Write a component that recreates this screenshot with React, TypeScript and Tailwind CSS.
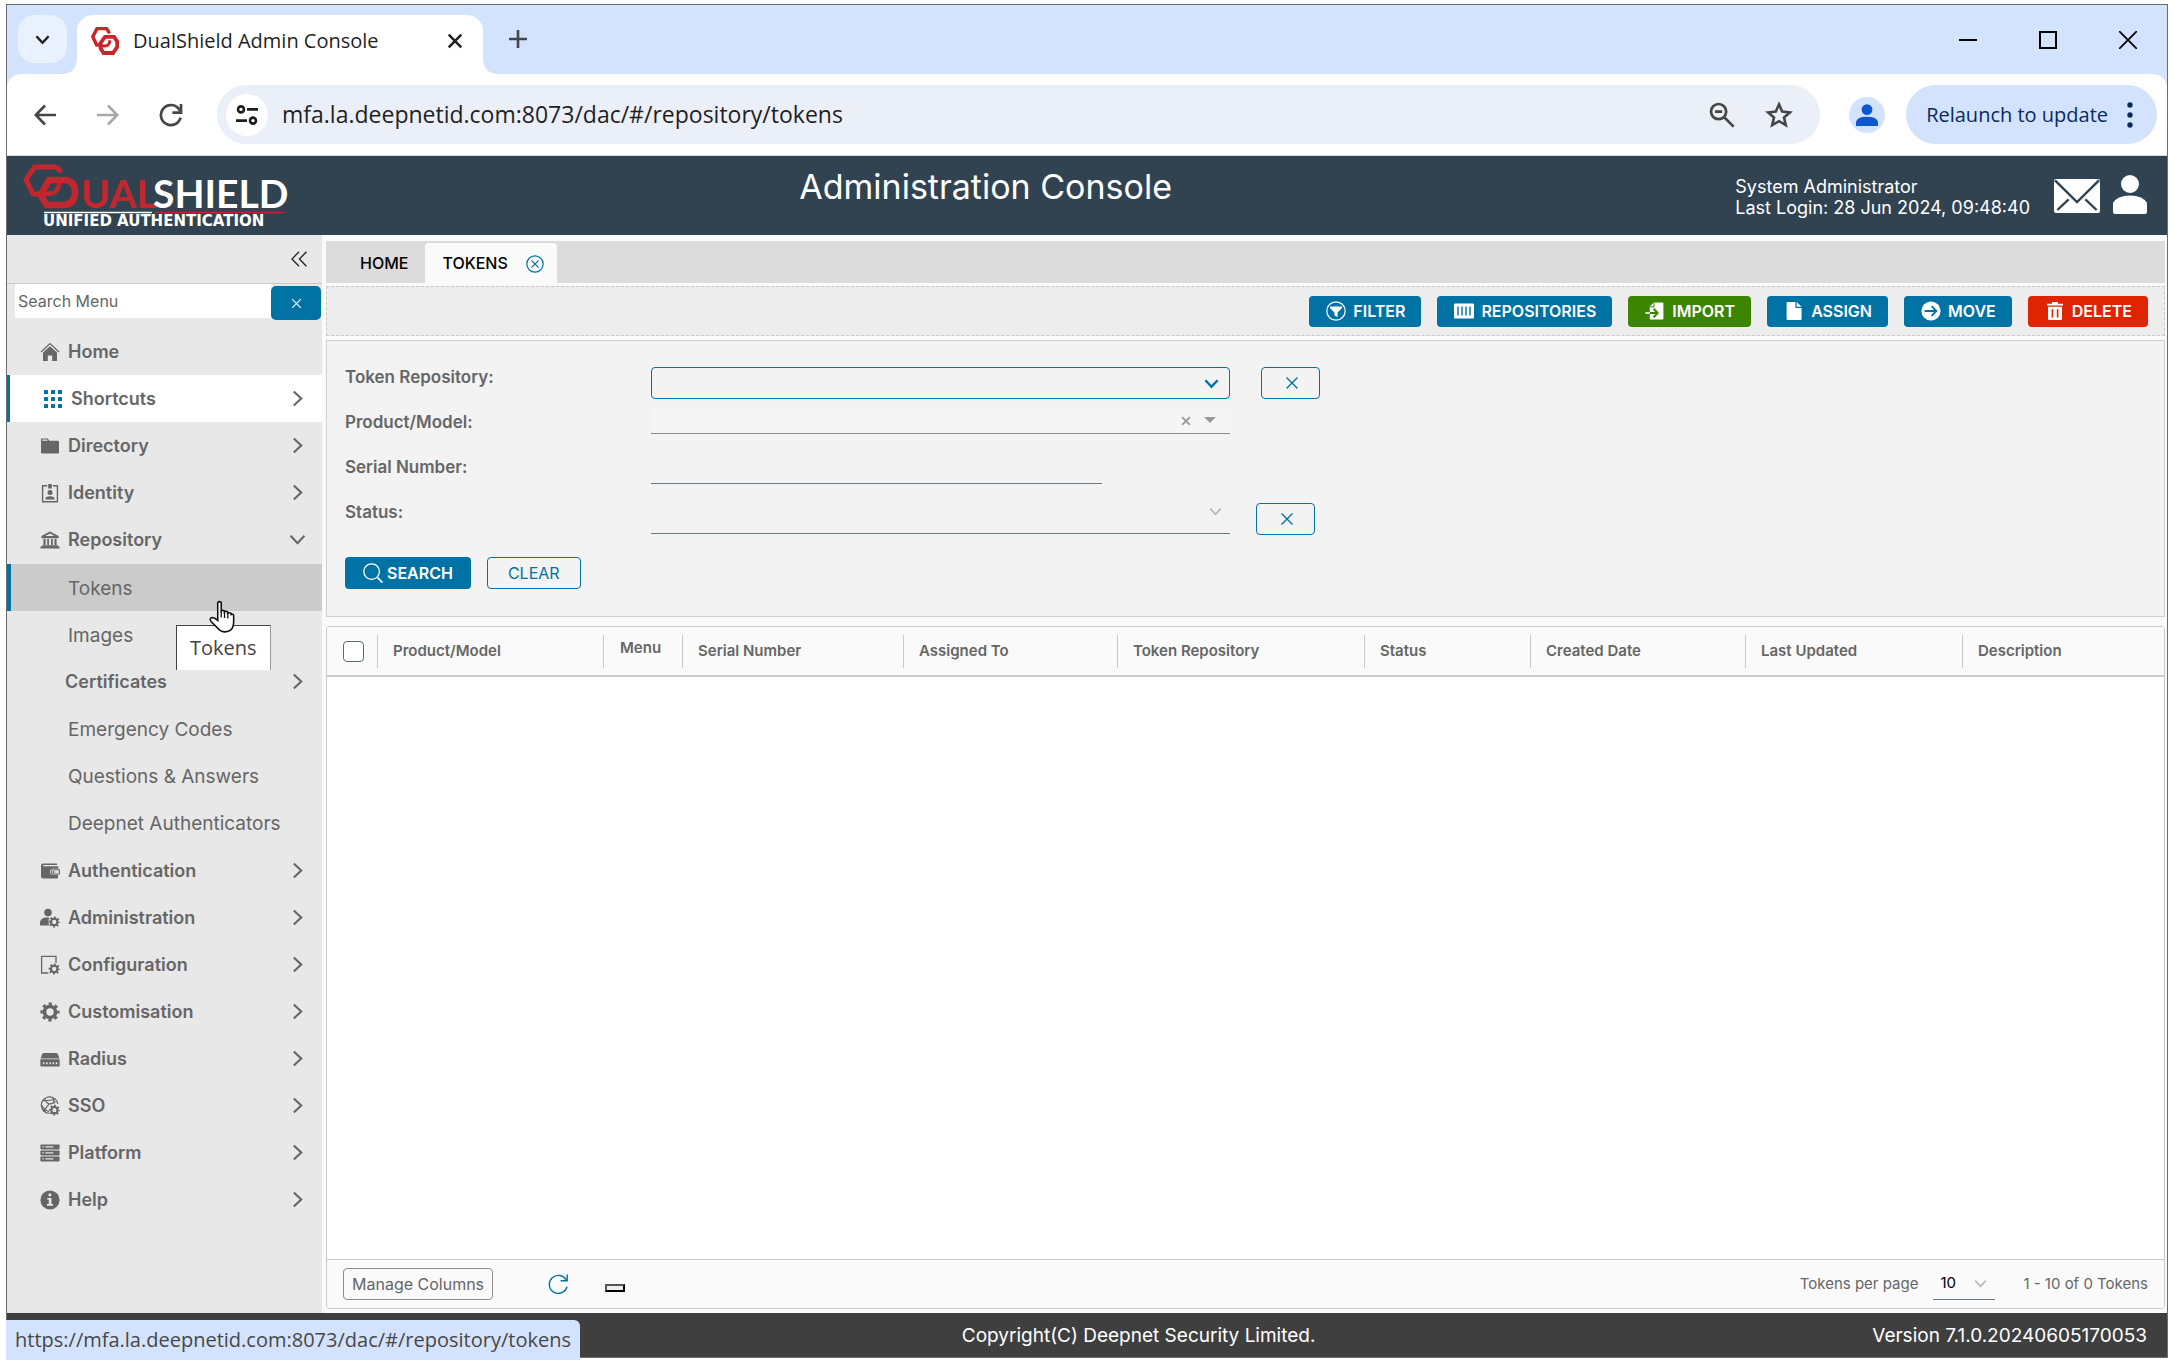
import React from "react";

type P = { className?: string };
const UI = "font-['Inter',sans-serif]";

function Gear({ cx, cy, r }: { cx: number; cy: number; r: number }) {
  const outer = r * 0.88;
  return (
    <g fill="none" stroke="currentColor">
      <circle cx={cx} cy={cy} r={r * 0.6} strokeWidth={r * 0.4} />
      <circle cx={cx} cy={cy} r={outer} strokeWidth={r * 0.32} strokeDasharray={`${(Math.PI * outer) / 8}`} strokeDashoffset={(Math.PI * outer) / 16} />
    </g>
  );
}

function Icon({ children, className = "size-[20px]" }: { children: React.ReactNode; className?: string }) {
  return <svg viewBox="0 0 20 20" className={className} fill="currentColor" aria-hidden="true">{children}</svg>;
}

const HomeIcon = () => (
  <Icon>
    <path d="M1 10 10 1.6 19 10" fill="none" stroke="currentColor" strokeWidth="1.3" />
    <path d="M10 4.2 17 10.6V19H12.2V13.5H7.8V19H3V10.6Z" />
  </Icon>
);
const GridIcon = () => (
  <Icon>
    {[1, 8, 15].map((x) => [1, 8, 15].map((y) => <rect key={`${x}-${y}`} x={x} y={y} width="4" height="4" rx=".6" />))}
  </Icon>
);
const FolderIcon = () => (
  <Icon>
    <path d="M1 3.2Q1 2.4 2 2.4H7.2Q8 2.4 8.4 3.2L9.2 4.8H18Q19 4.8 19 5.8V16.6Q19 17.6 18 17.6H2Q1 17.6 1 16.6Z" />
    <path d="M2.3 4.8V3.6H7L7.6 4.8Z" fill="#e8e8e8" />
  </Icon>
);
const IdentityIcon = () => (
  <Icon>
    <path d="M7.2 2.8H2.6V18.8H17.4V2.8H12.8" fill="none" stroke="currentColor" strokeWidth="1.4" />
    <rect x="8.2" y="1" width="3.6" height="4.4" rx=".5" />
    <circle cx="10" cy="9.6" r="2.5" />
    <path d="M5.2 16.6Q5.4 13.2 10 13.2T14.8 16.6Z" />
  </Icon>
);
const BankIcon = () => (
  <Icon>
    <path d="M10 1.6 18.6 6V8.2H1.4V6Z" />
    <path d="M10 3.4 14.6 6H5.4Z" fill="#e8e8e8" />
    <path d="M3.4 9H5.6V15H3.4ZM7.2 9H9V15H7.2ZM11 9H12.8V15H11ZM14.4 9H16.6V15H14.4ZM2 15.2H18V16.6H19.6V18.6H.4V16.6H2Z" />
  </Icon>
);
const WalletIcon = () => (
  <Icon>
    <path d="M1 4.6Q1 2.4 3 2.4H17V4H3.2V5.2H17.4Q18.4 5.2 18.4 6.2V7.8H12.4Q10 8.2 10 10.8T12.4 13.8H18V16.4Q18 17.6 17 17.6H3Q1 17.6 1 15.6Z" />
    <path d="M12.8 8.8H19.4V13H12.8Q11.4 12.6 11.4 10.9T12.8 8.8Z" fill="none" stroke="currentColor" strokeWidth="1.1" />
    <circle cx="13.8" cy="10.9" r="1" />
  </Icon>
);
const AdminIcon = () => (
  <Icon>
    <circle cx="8" cy="4.6" r="3.8" />
    <path d="M0 17.6V14Q1 9.8 6.4 9.6 9.6 9.4 9.4 10.6 7.6 13 9.2 17.6Z" />
    <Gear cx={14.2} cy={14} r={5.4} />
  </Icon>
);
const ConfigIcon = () => (
  <Icon>
    <path d="M16 8V1.4H1.6V18H8.4" fill="none" stroke="currentColor" strokeWidth="1.3" />
    <Gear cx={14.2} cy={14} r={5.4} />
  </Icon>
);
const GearIcon = () => <Icon><Gear cx={10} cy={10} r={9.2} /></Icon>;
const RadiusIcon = () => (
  <Icon>
    <path d="M3.6 4H16.4Q17.4 4 18 5.6L19.4 9.4H.6L2 5.6Q2.6 4 3.6 4Z" />
    <path d="M.4 10.2H19.6V16.4Q19.6 17.6 18.4 17.6H1.6Q.4 17.6 .4 16.4Z" />
    <path d="M3 14.2H17.4" stroke="#e8e8e8" strokeWidth="2" strokeDasharray="1.5 1.7" />
  </Icon>
);
const SsoIcon = () => (
  <Icon>
    <g fill="none" stroke="currentColor" strokeWidth="1.2">
      <path d="M17.8 8A8.3 8.3 0 1 0 9.4 17.4" />
      <path d="M3 4.6Q9 5 15.4 3M5 3.6Q8 11 15.6 5.4M9 8 4 14.6M1.4 9Q5 15 9 15.4M13 2Q14 5 14 7.6" />
    </g>
    <circle cx="4.4" cy="14.6" r="1.5" />
    <Gear cx={14.4} cy={14.2} r={5.2} />
  </Icon>
);
const PlatformIcon = () => (
  <Icon>
    {[1.4, 7.4, 13.4].map((y) => (
      <g key={y}>
        <rect x=".4" y={y} width="19.2" height="5" rx=".8" />
        <path d={`M2.4 ${y + 2.5}h1.4M5.4 ${y + 2.5}h8`} stroke="#e8e8e8" strokeWidth="1.3" />
      </g>
    ))}
  </Icon>
);
const InfoIcon = () => (
  <Icon>
    <circle cx="10" cy="10" r="9.6" />
    <path d="M8.6 3.6H11.2V6.2H8.6ZM7.2 8H11.4V14H13V15.8H7V14H8.8V9.6H7.2Z" fill="#e8e8e8" />
  </Icon>
);

const Cross = ({ className = "size-[14px]" }: P) => (
  <svg viewBox="0 0 14 14" className={className} fill="none" stroke="currentColor" strokeWidth="1.4" aria-hidden="true"><path d="M1.5 1.5 12.5 12.5M12.5 1.5 1.5 12.5" /></svg>
);
const Chevron = ({ className = "size-[16px]" }: P) => (
  <svg viewBox="0 0 16 16" className={className} fill="none" stroke="currentColor" strokeWidth="2" aria-hidden="true"><path d="M4.5 1.5 11.5 8 4.5 14.5" /></svg>
);
const ChevronDown = ({ className = "size-[16px]" }: P) => (
  <svg viewBox="0 0 16 16" className={className} fill="none" stroke="currentColor" strokeWidth="2" aria-hidden="true"><path d="M1.5 4.5 8 11.5 14.5 4.5" /></svg>
);

const Favicon = () => (
  <svg viewBox="0 0 28 28" className="size-[28px] shrink-0" fill="none" stroke="#c9252b" aria-hidden="true">
    <path d="M8 18H5.6L1.8 9.6 6 1.6H15.6L18.6 6.4" strokeWidth="3.4" />
    <path d="M14 9.8H23L26.2 14.6V20L22 26H12.6L9.6 21.4V16Z" strokeWidth="3.8" />
    <path d="M10 19H14.4Q18.6 18.6 18.8 13.2" strokeWidth="3" />
  </svg>
);

const Logo = () => (
  <svg viewBox="0 0 290 70" className="h-[70px] w-[290px] shrink-0" role="img" aria-label="DualShield Unified Authentication">
    <g fill="none" stroke="#c1272d">
      <path d="M19 33H13L6 18.5 14.6 6H34Q39.4 6.4 40.4 11.6" strokeWidth="5" />
      <path d="M29 19H45Q55 20 55 31 55 43 44 44H26.6L20.6 34Z" strokeWidth="6.6" />
      <path d="M21 32.6H30Q38 32 39.4 22" strokeWidth="4.6" />
    </g>
    <text x="61" y="47" fill="#c1272d" className="font-['Lato',sans-serif] text-[39px] font-bold">UAL</text>
    <text x="133" y="47" fill="#fff" className="font-['Lato',sans-serif] text-[39px] font-bold">SHIELD</text>
    <path d="M24 51.5H132" stroke="#fff" strokeWidth="1.4" />
    <path d="M135 51.5H264" stroke="#c1272d" strokeWidth="1.4" />
    <text x="23" y="65" fill="#fff" className="font-['DejaVu_Sans',sans-serif] text-[15px] font-bold">UNIFIED AUTHENTICATION</text>
  </svg>
);

const HandCursor = ({ className }: P) => (
  <svg viewBox="0 0 26 34" className={className} aria-hidden="true">
    <path d="M8.6 2.6Q10.4 .8 12.2 2.6V11.4Q13.6 9.8 15.4 11.2V12.4Q17.4 10.8 18.8 12.4V13.8Q20.8 12.4 22.4 14V15Q24.6 14 25 16V23Q24.6 29 21.6 31.2 15.4 34.6 10.6 31L2 22.4Q-.6 18.6 2.8 18 5.4 18 8.6 21Z" fill="#fff" stroke="#111" strokeWidth="1.6" />
    <path d="M12.2 11V18M15.6 12.4V18.6M19 13.8V19" stroke="#111" strokeWidth="1.3" />
  </svg>
);

function BrowserChrome() {
  return (
    <div className="bg-[#d3e3fd] font-['Open_Sans',sans-serif] text-[#1f1f1f]">
      <div className="flex h-[69px] items-start">
        <button aria-label="Search tabs" className="mt-[10px] ml-[11px] grid h-[48px] w-[49px] place-items-center rounded-[16px] bg-[#e9f1fe]">
          <ChevronDown className="size-[15px] stroke-[2.6px]" />
        </button>
        <svg viewBox="0 0 16 16" className="mt-[53px] -ml-[6px] size-[16px] shrink-0" fill="#fff" aria-hidden="true"><path d="M16 0V16H0Q16 16 16 0Z" /></svg>
        <div className="mt-[10px] flex h-[59px] w-[406px] items-center rounded-t-[16px] bg-white pr-[20px] pb-[8px] pl-[14px]">
          <Favicon />
          <span className="ml-[14px] flex-1 text-[20px] whitespace-nowrap">DualShield Admin Console</span>
          <button aria-label="Close tab"><Cross className="size-[16px] stroke-[2.2px]" /></button>
        </div>
        <svg viewBox="0 0 16 16" className="mt-[53px] size-[16px] shrink-0" fill="#fff" aria-hidden="true"><path d="M0 0V16H16Q0 16 0 0Z" /></svg>
        <button aria-label="New tab" className="mt-[25px] ml-[10px] text-[#444746]">
          <svg viewBox="0 0 18 18" className="size-[18px]" stroke="currentColor" strokeWidth="2.6"><path d="M9 0V18M0 9H18" /></svg>
        </button>
        <div className="mt-[26px] mr-[30px] ml-auto flex gap-[62px] text-black">
          <button aria-label="Minimize"><svg viewBox="0 0 18 18" className="size-[18px]" stroke="currentColor" strokeWidth="2"><path d="M0 9H18" /></svg></button>
          <button aria-label="Maximize"><svg viewBox="0 0 18 18" className="size-[18px]" fill="none" stroke="currentColor" strokeWidth="2"><path d="M1 1H17V17H1Z" /></svg></button>
          <button aria-label="Close window"><svg viewBox="0 0 18 18" className="size-[18px]" stroke="currentColor" strokeWidth="1.8"><path d="M0 0 18 18M18 0 0 18" /></svg></button>
        </div>
      </div>
      <div className="flex h-[82px] items-center rounded-t-[14px] border-b border-[#d5dfde] bg-white pr-[10px] pl-[27px]">
        <button aria-label="Back" className="text-[#444746]"><svg viewBox="0 0 22 22" className="size-[22px]" fill="none" stroke="currentColor" strokeWidth="2.6"><path d="M22 11H2M11 1.5 1.8 11 11 20.5" /></svg></button>
        <button aria-label="Forward" className="ml-[41px] text-[#a8aaaa]"><svg viewBox="0 0 22 22" className="size-[22px]" fill="none" stroke="currentColor" strokeWidth="2.6"><path d="M0 11H20M11 1.5 20.2 11 11 20.5" /></svg></button>
        <button aria-label="Reload" className="ml-[40px] text-[#444746]">
          <svg viewBox="0 0 24 24" className="size-[24px]" fill="none" stroke="currentColor" strokeWidth="2.7"><path d="M21.6 14.6A10 10 0 1 1 19.6 5.6L21 8" /><path d="M22 1V9.6H13.4" /></svg>
        </button>
        <div className="ml-[34px] flex h-[59px] flex-1 items-center rounded-full bg-[#ebeff8] pr-[27px] pl-[9px]">
          <button aria-label="Site information" className="grid size-[42px] place-items-center rounded-full bg-white">
            <svg viewBox="0 0 22 20" className="h-[20px] w-[22px]" fill="none" stroke="currentColor" strokeWidth="2.6"><circle cx="5" cy="4.4" r="3" /><path d="M11 4.4H22M0 15.6H11" /><circle cx="17" cy="15.6" r="3" /></svg>
          </button>
          <input aria-label="Address" defaultValue="mfa.la.deepnetid.com:8073/dac/#/repository/tokens" className="ml-[14px] min-w-0 flex-1 bg-transparent text-[23px] outline-none" />
          <button aria-label="Zoom" className="text-[#444746]">
            <svg viewBox="0 0 26 26" className="size-[26px]" fill="none" stroke="currentColor" strokeWidth="2.7"><circle cx="9.6" cy="9.6" r="7.6" /><path d="M6 9.6H13.2M15 15 24.6 24.6" /></svg>
          </button>
          <button aria-label="Bookmark" className="ml-[30px] text-[#444746]">
            <svg viewBox="0 0 28 28" className="size-[28px]" fill="none" stroke="currentColor" strokeWidth="2.6"><path d="M14 3.4 17.2 10.6 25 11.4 19 16.4 20.8 24.2 14 20.2 7.2 24.2 9 16.4 3 11.4 10.8 10.6Z" /></svg>
          </button>
        </div>
        <button aria-label="Profile" className="ml-[29px] grid size-[36px] place-items-center rounded-full bg-[#d3e3fd] text-[#0b57d0]">
          <svg viewBox="0 0 22 22" className="size-[22px]" fill="currentColor"><circle cx="11" cy="5.6" r="5.4" /><path d="M0 22V18Q1 12.8 11 12.8T22 18V22Z" /></svg>
        </button>
        <button className="ml-[21px] flex h-[59px] items-center rounded-full bg-[#d3e3fd] pr-[24px] pl-[20px] text-[20px] whitespace-nowrap text-[#0a2a5e]">
          Relaunch to update
          <svg viewBox="0 0 6 26" className="ml-[19px] h-[26px] w-[6px]" fill="currentColor"><circle cx="3" cy="3" r="2.7" /><circle cx="3" cy="13" r="2.7" /><circle cx="3" cy="23" r="2.7" /></svg>
        </button>
      </div>
    </div>
  );
}

function AppHeader() {
  return (
    <header className="flex h-[79px] bg-[#314351] text-white">
      <div className="pt-[5px] pl-[13px]"><Logo /></div>
      <h1 className="flex-1 pt-[9px] pr-[74px] text-center text-[34px] leading-[44px]">Administration Console</h1>
      <div className="pt-[20px] text-[18px] leading-[21px]">
        <p>System Administrator</p>
        <p>Last Login: 28 Jun 2024, 09:48:40</p>
      </div>
      <button aria-label="Messages" className="ml-[24px] self-start pt-[23px]">
        <svg viewBox="0 0 46 34" className="h-[34px] w-[46px]"><rect width="46" height="34" rx="2" fill="#fff" /><path d="M1 1.4 23 23 45 1.4M3.4 31 14.6 20.4M42.6 31 31.4 20.4" fill="none" stroke="#314351" strokeWidth="2.4" /></svg>
      </button>
      <button aria-label="Account" className="mr-[20px] ml-[13px] self-start pt-[19px]">
        <svg viewBox="0 0 34 39" className="h-[39px] w-[34px]" fill="#fff"><circle cx="17" cy="9" r="9" /><path d="M0 37V28Q4 21 17 20.6 30 21 34 28V37Q34 39 32 39H2Q0 39 0 37Z" /></svg>
      </button>
    </header>
  );
}

const ROW = "flex h-[47px] w-full items-center pr-[16px] text-left";

function MenuItem({ icon, label, open }: { icon: React.ReactNode; label: string; open?: boolean }) {
  return (
    <li>
      <button className={`${ROW} pl-[33px]`}>
        {icon}
        <span className="ml-[8px] flex-1 text-[18px] font-semibold">{label}</span>
        {label !== "Home" && (open ? <ChevronDown className="size-[17px]" /> : <Chevron className="size-[17px]" />)}
      </button>
    </li>
  );
}

function SubItem({ label }: { label: string }) {
  return <li><a href="#item" className={`${ROW} pt-[3px] pl-[61px] text-[19px]`}>{label}</a></li>;
}

function Sidebar() {
  return (
    <nav className="w-[315px] shrink-0 bg-[#e8e8e8] text-[#666]">
      <div className="flex h-[49px] items-center justify-end border-b border-[#c9c9c9] pr-[15px] text-[#222]">
        <button aria-label="Collapse menu"><svg viewBox="0 0 16 16" className="size-[16px]" fill="none" stroke="currentColor" strokeWidth="1.3"><path d="M8 .8 1 8 8 15.2M15.4 .8 8.4 8 15.4 15.2" /></svg></button>
      </div>
      <div className="flex pr-px pl-[8px]">
        <input aria-label="Search Menu" placeholder="Search Menu" className="h-[34px] min-w-0 flex-1 bg-white pl-[3px] text-[16px] outline-none placeholder:text-[#666]" />
        <button aria-label="Clear search" className="mt-[2px] grid h-[34px] w-[50px] place-items-center rounded-[5px] bg-[#0072a3] text-white"><Cross className="size-[11px]" /></button>
      </div>
      <ul className="mt-[8px]">
        <MenuItem icon={<HomeIcon />} label="Home" />
        <li>
          <button className={`${ROW} border-l-[3px] border-[#0072a3] bg-white pl-[33px]`}>
            <span className="text-[#0072a3]"><GridIcon /></span>
            <span className="ml-[8px] flex-1 text-[18px] font-semibold">Shortcuts</span>
            <Chevron className="size-[17px]" />
          </button>
        </li>
        <MenuItem icon={<FolderIcon />} label="Directory" />
        <MenuItem icon={<IdentityIcon />} label="Identity" />
        <MenuItem icon={<BankIcon />} label="Repository" open />
        <li className="py-px">
          <ul>
            <li className="relative">
              <a href="#tokens" className={`${ROW} border-l-4 border-[#0072a3] bg-[#cbcbcb] pt-[3px] pl-[57px] text-[19px]`}>Tokens</a>
              <div role="tooltip" className="absolute top-[61px] left-[169px] z-10 flex h-[45px] items-center border-t border-r border-l border-t-[#444] border-r-[#999] border-l-[#444] bg-white px-[13px] font-['Open_Sans',sans-serif] text-[20px] text-[#444]">Tokens</div>
              <HandCursor className="absolute top-[36px] left-[202px] z-20 h-[33px] w-[26px]" />
            </li>
            <SubItem label="Images" />
            <li>
              <button className={`${ROW} pl-[58px]`}>
                <span className="flex-1 text-[18px] font-semibold">Certificates</span>
                <Chevron className="size-[17px]" />
              </button>
            </li>
            <SubItem label="Emergency Codes" />
            <SubItem label="Questions & Answers" />
            <SubItem label="Deepnet Authenticators" />
          </ul>
        </li>
        <MenuItem icon={<WalletIcon />} label="Authentication" />
        <MenuItem icon={<AdminIcon />} label="Administration" />
        <MenuItem icon={<ConfigIcon />} label="Configuration" />
        <MenuItem icon={<GearIcon />} label="Customisation" />
        <MenuItem icon={<RadiusIcon />} label="Radius" />
        <MenuItem icon={<SsoIcon />} label="SSO" />
        <MenuItem icon={<PlatformIcon />} label="Platform" />
        <MenuItem icon={<InfoIcon />} label="Help" />
      </ul>
    </nav>
  );
}

function ActionButton({ tone, icon, label }: { tone: string; icon: React.ReactNode; label: string }) {
  return (
    <button className={`flex h-[31px] items-center gap-[7px] rounded-[4px] pr-[16px] pl-[17px] text-[16px] font-semibold text-white ${tone}`}>
      {icon}{label}
    </button>
  );
}

function Toolbar() {
  return (
    <div className="mt-[3px] flex h-[50px] items-center justify-end gap-[16px] border border-dashed border-[#c8c8c8] bg-[#ededed] pr-[16px]">
      <ActionButton tone="bg-[#0072a3]" label="FILTER" icon={<Icon><circle cx="10" cy="10" r="9.2" fill="none" stroke="currentColor" strokeWidth="1.2" /><path d="M4 5.4H16V7L11.6 11.4V16L8.4 14.6V11.4L4 7Z" /></Icon>} />
      <ActionButton tone="bg-[#0072a3]" label="REPOSITORIES" icon={<Icon><rect y="2.6" width="20" height="14.8" rx="1" /><path d="M4 5.4V14.4M8 5.4V14.4M12 5.4V14.4M16 5.4V14.4" stroke="#0072a3" strokeWidth="1.4" /></Icon>} />
      <ActionButton tone="bg-[#3c8500]" label="IMPORT" icon={<Icon><path d="M8.6 1.4H17Q18.4 1.4 18.4 2.6V17.4Q18.4 18.6 17 18.6H6Q4.8 18.6 4.8 17.4V5.4Z" /><path d="M4.8 12H12M8.6 7.8 12.6 12 8.6 16.2" fill="none" stroke="#3c8500" strokeWidth="2" /><path d="M.4 12H4.8" stroke="currentColor" strokeWidth="1.6" /><path d="M9 1.4V5.8H4.8" fill="none" stroke="#3c8500" strokeWidth="1" /></Icon>} />
      <ActionButton tone="bg-[#0072a3]" label="ASSIGN" icon={<Icon><path d="M2.6 2Q2.6 1 3.6 1H11.4V7H17.6V18Q17.6 19 16.6 19H3.6Q2.6 19 2.6 18Z" /><path d="M12.6 1 17.6 5.8H12.6Z" /></Icon>} />
      <ActionButton tone="bg-[#0072a3]" label="MOVE" icon={<Icon><circle cx="10" cy="10" r="9.6" /><path d="M3.6 10H15.4M10.6 5.2 15.4 10 10.6 14.8" fill="none" stroke="#0072a3" strokeWidth="1.8" /></Icon>} />
      <ActionButton tone="bg-[#de2400]" label="DELETE" icon={<Icon><path d="M7 1H13V2.8H18V4.6H2V2.8H7Z" /><path d="M3 5.8H17V18Q17 19 16 19H4Q3 19 3 18Z" /><path d="M7.4 8.2V16.4M12.6 8.2V16.4" stroke="#de2400" strokeWidth="1.6" /></Icon>} />
    </div>
  );
}

const LABEL = "w-[306px] shrink-0 text-[17px] leading-[26px] font-semibold text-[#666]";
const XBTN = "grid h-[32px] w-[59px] place-items-center rounded-[4px] border border-[#0072a3] pl-[3px] text-[#0072a3]";

function SearchForm() {
  return (
    <form className="mt-[4px] border border-[#d0d0d0] bg-[#f3f3f3] pt-[23px] pb-[27px] pl-[18px]">
      <div className="flex h-[45px] items-start">
        <label htmlFor="repo" className={LABEL}>Token Repository:</label>
        <div className="relative mt-[3px] w-[579px]">
          <select id="repo" className="block h-[32px] w-full appearance-none rounded-[4px] border border-[#0072a3] bg-transparent"><option></option></select>
          <ChevronDown className="pointer-events-none absolute top-[9px] right-[11px] size-[15px] stroke-[2.6px] text-[#0072a3]" />
        </div>
        <button type="button" aria-label="Clear repository" className={`${XBTN} mt-[3px] ml-[31px]`}><Cross className="size-[14px]" /></button>
      </div>
      <div className="flex h-[45px] items-start">
        <label htmlFor="model" className={LABEL}>Product/Model:</label>
        <div className="relative w-[579px]">
          <input id="model" className="block h-[25px] w-full border-b border-[#8c8c8c] bg-[#f5f5f5] outline-none" />
          <button type="button" aria-label="Clear model" className="absolute top-[7px] right-[39px] text-[#999]"><Cross className="size-[10px] stroke-[2.6px]" /></button>
          <svg viewBox="0 0 12 6" className="absolute top-[8px] right-[14px] h-[6px] w-[12px]" fill="#999" aria-hidden="true"><path d="M0 0H12L6 6Z" /></svg>
        </div>
      </div>
      <div className="flex h-[45px] items-start">
        <label htmlFor="serial" className={LABEL}>Serial Number:</label>
        <input id="serial" className="h-[30px] w-[451px] border-b border-[#6a7a86] bg-transparent outline-none" />
      </div>
      <div className="flex h-[45px] items-start">
        <label htmlFor="status" className={LABEL}>Status:</label>
        <div className="relative w-[579px]">
          <select id="status" className="block h-[35px] w-full appearance-none border-b border-[#5f7d82] bg-transparent"><option></option></select>
          <ChevronDown className="pointer-events-none absolute top-[6px] right-[8px] size-[13px] text-[#b8b8b8]" />
        </div>
        <button type="button" aria-label="Clear status" className={`${XBTN} mt-1 ml-[26px]`}><Cross className="size-[14px]" /></button>
      </div>
      <div className="mt-[13px] flex gap-[16px]">
        <button type="button" className="flex h-[32px] items-center gap-[4px] rounded-[4px] bg-[#0072a3] px-[18px] text-[16px] font-semibold text-white">
          <Icon><circle cx="8.6" cy="8.6" r="7.8" fill="none" stroke="currentColor" strokeWidth="1.3" /><path d="M14.4 14.4 19.4 19.6" stroke="currentColor" strokeWidth="1.6" /></Icon>
          SEARCH
        </button>
        <button type="button" className="h-[32px] rounded-[4px] border border-[#0072a3] px-[20px] text-[16px] text-[#0072a3]">CLEAR</button>
      </div>
    </form>
  );
}

const COLS: [string, string][] = [
  ["Product/Model", "w-[226px]"], ["Menu", "w-[79px]"], ["Serial Number", "w-[221px]"], ["Assigned To", "w-[214px]"], ["Token Repository", "w-[247px]"],
  ["Status", "w-[166px]"], ["Created Date", "w-[215px]"], ["Last Updated", "w-[217px]"], ["Description", "w-auto"],
];

function TokenTable() {
  return (
    <section className="mt-[9px] flex flex-1 flex-col overflow-hidden rounded-[4px] border border-[#c9c9c9] bg-white">
      <table className="w-full table-fixed border-b-2 border-[#c9c9c9] bg-[#fafafa] text-left text-[15px] text-[#666]">
        <thead>
          <tr className="h-[49px]">
            <th className="w-[50px] pl-[16px]"><input type="checkbox" aria-label="Select all" className="block size-[21px] appearance-none rounded-[4px] border border-[#5b6b75] bg-white" /></th>
            {COLS.map(([label, width]) => (
              <th key={label} scope="col" className={`${width} font-semibold`}>
                <span className={label === "Menu" ? "flex h-[33px] items-center border-l border-[#c9c9c9] pb-[6px] pl-[16px]" : "flex h-[33px] items-center border-l border-[#c9c9c9] pl-[15px]"}>{label}</span>
              </th>
            ))}
          </tr>
        </thead>
      </table>
      <div className="mt-auto flex h-[49px] items-center border-t border-[#c9c9c9] bg-[#fafafa] pr-[16px] pl-[16px] text-[15px] text-[#666]">
        <button className="h-[32px] rounded-[4px] border border-[#8c8c8c] px-[8px] text-[16px]">Manage Columns</button>
        <button aria-label="Refresh" className="ml-[55px] text-[#0072a3]">
          <svg viewBox="0 0 20 20" className="size-[20px]" fill="none" stroke="currentColor" strokeWidth="1.4"><path d="M19 12.8A9 9 0 1 1 18.4 6.4" /><path d="M19.2 .6V6.8H12.6" /></svg>
        </button>
        <button aria-label="Options" className="mt-[8px] ml-[37px] h-[8px] w-[20px] border-2 border-t-[#555] border-r-black border-b-black border-l-[#555] bg-[#efefef]" />
        <label htmlFor="page-size" className="ml-auto">Tokens per page</label>
        <div className="relative ml-[15px] w-[62px] self-end pb-[8px]">
          <select id="page-size" className="block h-[32px] w-full appearance-none border-b border-[#6a7a86] bg-transparent pl-[7px] text-black"><option>10</option></select>
          <ChevronDown className="pointer-events-none absolute top-[9px] right-[8px] size-[13px] text-[#b8b8b8]" />
        </div>
        <span className="ml-[28px]">1 - 10 of 0 Tokens</span>
      </div>
    </section>
  );
}

export default function App() {
  return (
    <div className={`relative flex min-h-screen flex-col bg-white pt-1 pr-[5px] pb-[5px] pl-[6px] ${UI}`}>
      <div className="flex flex-1 flex-col border border-[#6b6b70]">
        <BrowserChrome />
        <AppHeader />
        <div className="flex flex-1 bg-[#fafafa]">
          <Sidebar />
          <main className="flex min-w-0 flex-1 flex-col pt-[6px] pr-[2px] pb-[4px] pl-[4px]">
            <div className="flex h-[42px] items-end bg-[#dcdcdc] text-[16px] font-medium text-black">
              <button className="h-full pt-[2px] pr-[17px] pl-[34px]">HOME</button>
              <div className="flex h-[40px] items-center rounded-t-[4px] bg-[#fafafa] pr-[13px] pl-[17px]">
                <button>TOKENS</button>
                <button aria-label="Close Tokens tab" className="mt-[2px] ml-[18px] text-[#0072a3]">
                  <svg viewBox="0 0 18 18" className="size-[18px]" fill="none" stroke="currentColor" strokeWidth="1.2"><circle cx="9" cy="9" r="8.2" /><path d="M5.4 5.4 12.6 12.6M12.6 5.4 5.4 12.6" /></svg>
                </button>
              </div>
            </div>
            <Toolbar />
            <SearchForm />
            <TokenTable />
          </main>
        </div>
        <footer className="flex h-[44px] items-center bg-[#3f3f3f] pt-[3px] pr-[20px] text-[19px] text-white">
          <p className="flex-1 pl-[398px] text-center">Copyright(C) Deepnet Security Limited.</p>
          <p>Version 7.1.0.20240605170053</p>
        </footer>
      </div>
      <div className="absolute bottom-[3px] left-[6px] flex h-[40px] items-center rounded-tr-[6px] bg-[#d3e3fd] pr-[9px] pl-[9px] font-['Open_Sans',sans-serif] text-[20px] text-[#474747]">https://mfa.la.deepnetid.com:8073/dac/#/repository/tokens</div>
    </div>
  );
}
